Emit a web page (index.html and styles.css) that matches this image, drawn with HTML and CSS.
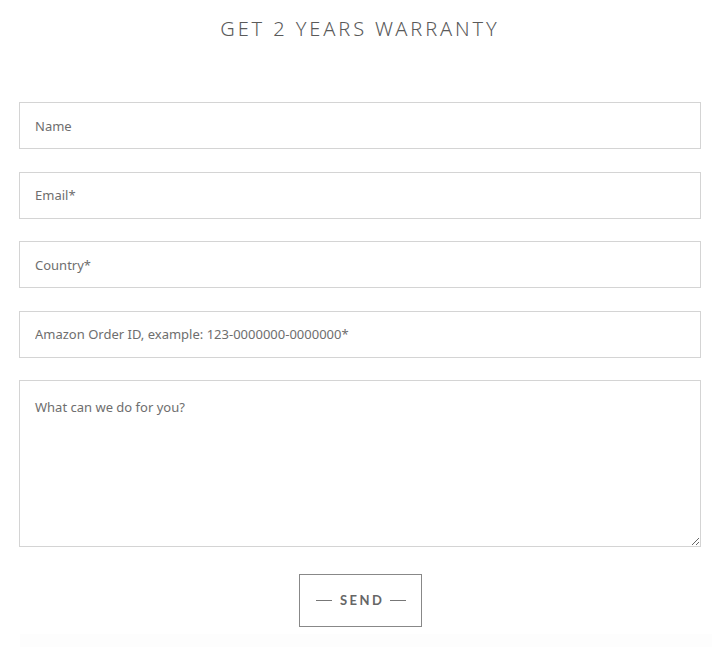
FILE: index.html
```html
<!DOCTYPE html>
<html lang="en">
<head>
  <meta charset="UTF-8">
  <meta name="viewport" content="width=device-width, initial-scale=1.0">
  <title>Get 2 Years Warranty</title>
  <link rel="stylesheet" href="styles.css">
</head>
<body>
  <div class="container">
    <h2>GET 2 YEARS WARRANTY</h2>

    <form class="warranty-form" onsubmit="return false;">
      <input type="text" placeholder="Name">
      <input type="email" placeholder="Email*">
      <input type="text" placeholder="Country*">
      <input type="text" placeholder="Amazon Order ID, example: 123-0000000-0000000*">
      <textarea placeholder="What can we do for you?"></textarea>

      <div class="actions">
        <button type="submit"><span class="send-label">SEND</span></button>
      </div>
    </form>
  </div>
  <div class="footer-band"></div>
</body>
</html>
```

FILE: styles.css
```css
body {
  font-family: 'Noto Sans', 'Lato', sans-serif;
  margin: 0;
  padding: 0;
  background: #fff;
  color: #666;
}

.container {
  padding: 0 11px 0 19px;
}

h2 {
  text-align: center;
  margin: 17px 0 0 0;
  font-size: 20px;
  font-weight: 300;
  letter-spacing: 2.9px;
  color: #5a5a5a;
  line-height: 24px;
}

.warranty-form {
  display: flex;
  flex-direction: column;
  gap: 22.5px;
  margin-top: 61px;
}

input, textarea {
  box-sizing: border-box;
  width: 100%;
  margin: 0;
  border: 1px solid #d4d4d4;
  border-radius: 0;
  background: #fff;
  font-family: 'Noto Sans', 'Lato', sans-serif;
  font-size: 13px;
  color: #555;
  padding: 0 15px;
  outline: none;
}

input {
  height: 47px;
}

textarea {
  height: 167px;
  padding: 16px 15px;
  resize: vertical;
  line-height: 20px;
}

input::placeholder, textarea::placeholder {
  color: #6e6e6e;
  opacity: 1;
}

.actions {
  display: flex;
  justify-content: center;
  margin-top: 4px;
}

button {
  box-sizing: border-box;
  width: 123px;
  height: 53px;
  background: #fff;
  border: 1px solid #888;
  color: #666;
  font-family: 'Lato', sans-serif;
  font-size: 13px;
  font-weight: 700;
  letter-spacing: 2.5px;
  cursor: pointer;
  display: flex;
  align-items: center;
  justify-content: center;
  gap: 8px;
  padding: 0 0 0 2px;
}

button::before, button::after {
  content: "";
  width: 16px;
  height: 1px;
  background: #777;
}

.send-label {
  margin-right: -2.5px;
}

.footer-band {
  margin: 7px 0 0 20px;
  height: 20px;
  background: #fdfdfd;
}
```
